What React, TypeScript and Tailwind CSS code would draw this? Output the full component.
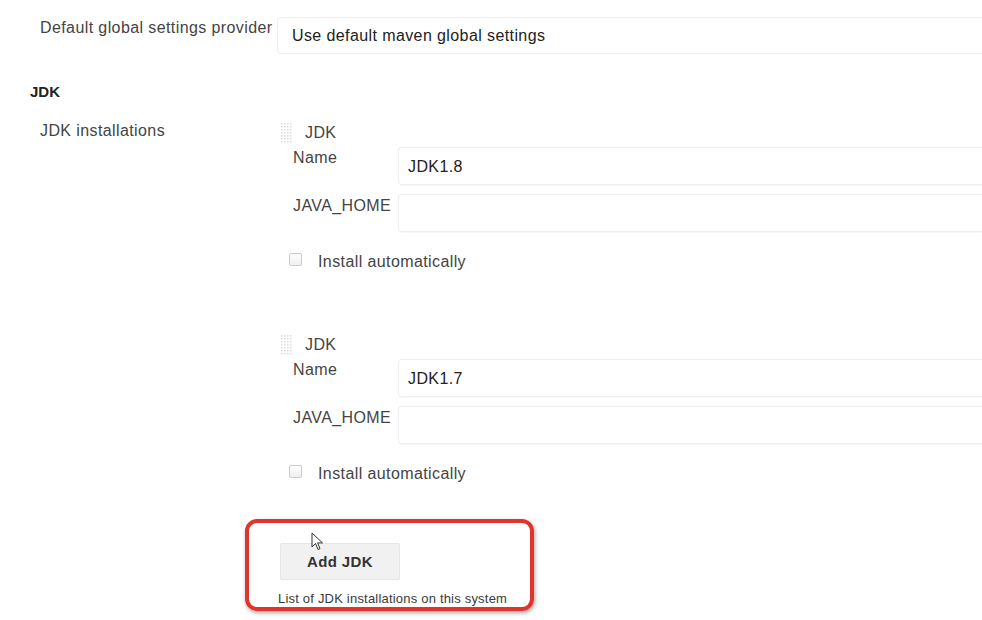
import React from "react";

const font = { fontFamily: '"Liberation Sans", Arial, sans-serif' };

function Handle() {
  const dots = [];
  for (let r = 0; r < 7; r++) {
    for (let c = 0; c < 4; c++) {
      dots.push(<rect key={`${r}-${c}`} x={c * 3} y={r * 3} width="1.5" height="1.5" fill="#dcdcdc" />);
    }
  }
  return (
    <svg width="12" height="21" viewBox="0 0 12 21" className="shrink-0">
      {dots}
    </svg>
  );
}

function TextBox({ value }: { value?: string }) {
  return (
    <div className="flex-1 h-[38px] border border-[#eeeeee] border-r-0 rounded-l-sm shadow-[0_1px_1px_rgba(0,0,0,0.03)] flex items-center pl-[9px] pt-[2px] text-[16px] tracking-[0.4px] leading-[20px] text-[#222]">
      {value}
    </div>
  );
}

function Checkbox() {
  return <div className="w-[13px] h-[13px] -mt-[6px] border border-[#cccccc] rounded-[2px] bg-gradient-to-b from-white to-[#efefef]" />;
}

type JdkProps = { name: string };

function JdkBlock({ name }: JdkProps) {
  return (
    <div className="flex flex-col text-[16px] tracking-[0.4px] leading-[20px] text-[#444]">
      <div className="flex items-center gap-[12px] h-[20px] pl-[281px]">
        <Handle />
        <span>JDK</span>
      </div>
      <div className="flex mt-[4px] pl-[293px]">
        <div className="w-[105px] pt-[1px]">Name</div>
        <TextBox value={name} />
      </div>
      <div className="flex mt-[9px] pl-[293px]">
        <div className="w-[105px] pt-[2px]">JAVA_HOME</div>
        <TextBox />
      </div>
      <div className="flex items-center gap-[16px] h-[20px] mt-[20px] pl-[289px]">
        <Checkbox />
        <span>Install automatically</span>
      </div>
    </div>
  );
}

function Cursor() {
  return (
    <svg width="14" height="20" viewBox="0 0 14 20" className="absolute left-[311px] top-[532px]">
      <path
        d="M1 1 L1 15 L4.5 11.5 L7 17.5 L9 16.6 L6.6 10.9 L11.5 10.9 Z"
        fill="#fff"
        stroke="#333"
        strokeWidth="1"
        strokeLinejoin="round"
      />
    </svg>
  );
}

export default function App() {
  return (
    <div className="relative w-[982px] h-[620px] bg-white overflow-hidden" style={font}>
      <div className="flex pt-[17px] text-[16px] tracking-[0.4px] leading-[20px]">
        <div className="w-[277px] pl-[40px] pt-[1px] text-[#444]">Default global settings provider</div>
        <div className="flex-1 h-[37px] border border-[#eeeeee] border-r-0 rounded-l-sm flex items-center pl-[14px] text-[#222]">
          Use default maven global settings
        </div>
      </div>

      <div className="pl-[30px] mt-[28px] text-[15px] leading-[20px] font-bold text-[#222]">JDK</div>

      <div className="flex flex-col mt-[21px]">
        <div className="relative">
          <div className="absolute left-[40px] top-[-2px] text-[16px] tracking-[0.4px] leading-[20px] text-[#444]">
            JDK installations
          </div>
          <JdkBlock name="JDK1.8" />
        </div>
        <div className="mt-[63px]">
          <JdkBlock name="JDK1.7" />
        </div>
        <div className="flex flex-col pl-[278px] mt-[59px]">
          <button className="ml-[2px] w-[120px] h-[37px] bg-[#f1f1f1] border border-[#e6e6e6] rounded-[2px] text-[15px] tracking-[0.4px] font-bold text-[#333] flex items-center justify-center pt-[1px]">
            Add JDK
          </button>
          <div className="mt-[11px] text-[13px] leading-[16px] tracking-[0.2px] text-[#3a3a3a]">
            List of JDK installations on this system
          </div>
        </div>
      </div>

      <div className="absolute left-[245px] top-[519px] w-[289px] h-[92px] border-[4px] border-[#e2342c] rounded-[12px] shadow-[1px_2px_4px_rgba(0,0,0,0.35)]" />
      <Cursor />
    </div>
  );
}
